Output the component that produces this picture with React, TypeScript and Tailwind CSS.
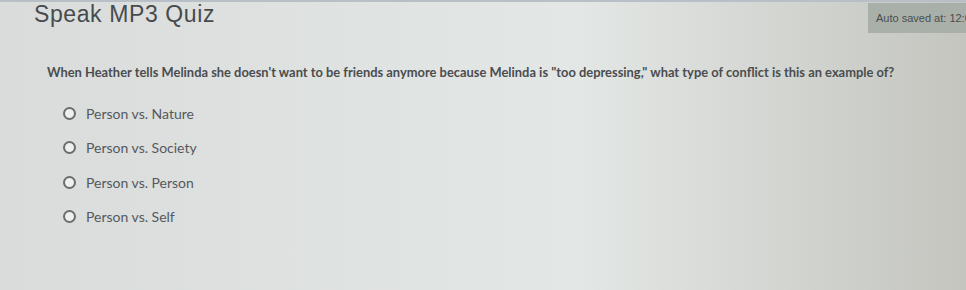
import React from 'react'

const options = ['Person vs. Nature', 'Person vs. Society', 'Person vs. Person', 'Person vs. Self']

export default function App() {
  return (
    <div className="h-[290px] w-[966px] overflow-hidden bg-linear-to-r from-[#d9dcda] via-[#e3e7e5] via-60% to-[#c4c5bf] font-['Lato','Liberation_Sans',sans-serif]">
      <header className="flex h-[38px] items-start justify-between border-t-2 border-[#b9bfc6]">
        <h1 className="pl-[34px] pt-[1px] font-['Liberation_Sans',Arial,sans-serif] text-[23px] leading-[23px] tracking-[0.6px] text-[#474b4e]">
          Speak MP3 Quiz
        </h1>
        <div className="mt-[1px] flex h-[30px] w-[98px] items-center overflow-hidden whitespace-nowrap bg-[#a9b0aa] pl-[8px] font-['Liberation_Sans',Arial,sans-serif] text-[11px] text-[#4a4f4c]">
          Auto saved at: 12:04 PM
        </div>
      </header>

      <main className="pl-[47px] pt-[25px]">
        <p className="whitespace-nowrap text-[12.9px] font-bold text-[#4a4d50]">
          When Heather tells Melinda she doesn't want to be friends anymore because Melinda is "too depressing," what type of conflict is this an example of?
        </p>

        <ul className="mt-[21px] flex flex-col gap-[14.5px] pl-[16px]">
          {options.map((o) => (
            <li key={o} className="flex h-[20px] items-center gap-[10px]">
              <span className="h-[13px] w-[13px] rounded-full border-2 border-[#6a6d6e] bg-[#eef0ee]" />
              <span className="text-[14px] text-[#55595e]">{o}</span>
            </li>
          ))}
        </ul>
      </main>
    </div>
  )
}
